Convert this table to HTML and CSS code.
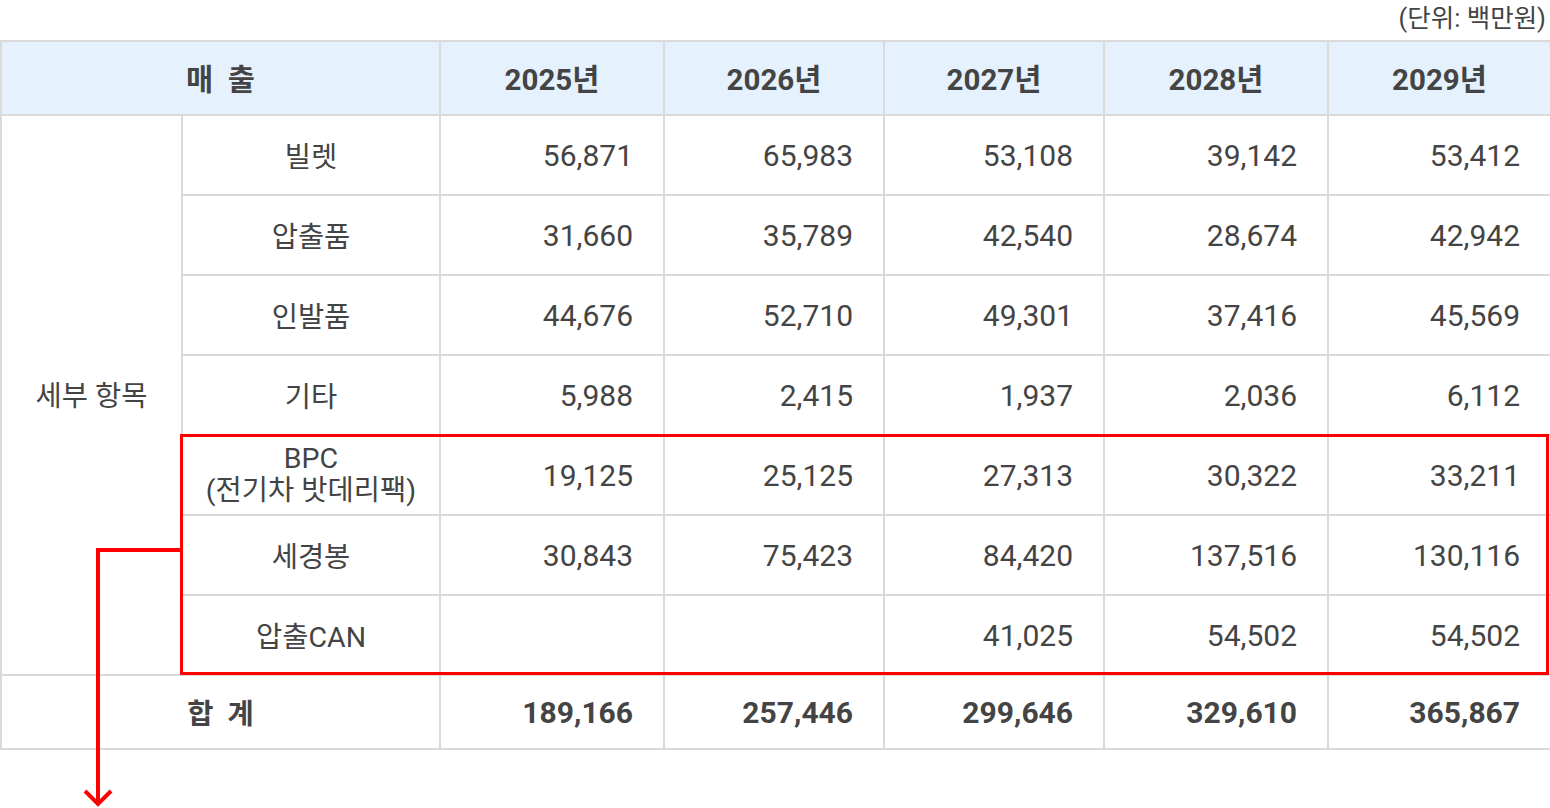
FILE: index.html
```html
<!DOCTYPE html>
<html lang="ko">
<head>
<meta charset="utf-8">
<link rel="stylesheet" href="styles.css">
</head>
<body>
<div class="page">
  <div class="unit">(단위: 백만원)</div>
  <table class="sales">
    <colgroup>
      <col class="c1"><col class="c2"><col class="c3"><col class="c4"><col class="c5"><col class="c6"><col class="c7">
    </colgroup>
    <thead>
      <tr class="head">
        <th colspan="2">매&nbsp;&nbsp;출</th>
        <th>2025년</th><th>2026년</th><th>2027년</th><th>2028년</th><th>2029년</th>
      </tr>
    </thead>
    <tbody>
      <tr>
        <td class="group" rowspan="7">세부 항목</td>
        <td class="name">빌렛</td>
        <td class="num">56,871</td><td class="num">65,983</td><td class="num">53,108</td><td class="num">39,142</td><td class="num">53,412</td>
      </tr>
      <tr>
        <td class="name">압출품</td>
        <td class="num">31,660</td><td class="num">35,789</td><td class="num">42,540</td><td class="num">28,674</td><td class="num">42,942</td>
      </tr>
      <tr>
        <td class="name">인발품</td>
        <td class="num">44,676</td><td class="num">52,710</td><td class="num">49,301</td><td class="num">37,416</td><td class="num">45,569</td>
      </tr>
      <tr>
        <td class="name">기타</td>
        <td class="num">5,988</td><td class="num">2,415</td><td class="num">1,937</td><td class="num">2,036</td><td class="num">6,112</td>
      </tr>
      <tr>
        <td class="name two">BPC<br>(전기차 밧데리팩)</td>
        <td class="num">19,125</td><td class="num">25,125</td><td class="num">27,313</td><td class="num">30,322</td><td class="num">33,211</td>
      </tr>
      <tr>
        <td class="name">세경봉</td>
        <td class="num">30,843</td><td class="num">75,423</td><td class="num">84,420</td><td class="num">137,516</td><td class="num">130,116</td>
      </tr>
      <tr>
        <td class="name">압출CAN</td>
        <td class="num"></td><td class="num"></td><td class="num">41,025</td><td class="num">54,502</td><td class="num">54,502</td>
      </tr>
      <tr class="total">
        <td colspan="2" class="total-label">합&nbsp;&nbsp;계</td>
        <td class="num">189,166</td><td class="num">257,446</td><td class="num">299,646</td><td class="num">329,610</td><td class="num">365,867</td>
      </tr>
    </tbody>
  </table>
  <div class="highlight"></div>
  <svg class="arrow" width="200" height="808" viewBox="0 0 200 808">
    <polyline points="182,550 98,550 98,803" fill="none" stroke="#ff0000" stroke-width="4"/>
    <polyline points="85,791 98,804 111,791" fill="none" stroke="#ff0000" stroke-width="4"/>
  </svg>
</div>
</body>
</html>
```

FILE: styles.css
```css
html, body {
  margin: 0;
  padding: 0;
  background: #ffffff;
}

.page {
  position: relative;
  width: 1550px;
  height: 808px;
  font-family: Roboto, "Noto Sans CJK KR", sans-serif;
  color: #444444;
}

.unit {
  height: 40px;
  line-height: 36px;
  text-align: right;
  padding-right: 4px;
  font-size: 25.5px;
  color: #444444;
}

.sales {
  width: 1550px;
  border-collapse: collapse;
  table-layout: fixed;
  font-size: 30px;
}

.c1 { width: 181px; }
.c2 { width: 258px; }
.c3 { width: 224px; }
.c4 { width: 220px; }
.c5 { width: 220px; }
.c6 { width: 224px; }
.c7 { width: 223px; }

.sales th,
.sales td {
  border: 2px solid #dadada;
  padding: 0;
}

.head th {
  height: 74px;
  padding-bottom: 3px;
  box-sizing: border-box;
  background: #e5f1fd;
  font-weight: 700;
  font-size: 29.5px;
  text-align: center;
  color: #444444;
}

.sales tbody tr {
  height: 80px;
}

.sales tbody tr.total {
  height: 74px;
}

.group {
  text-align: center;
  font-size: 28.5px;
  padding-bottom: 3px !important;
}

.name {
  text-align: center;
  font-size: 28.5px;
  padding-bottom: 2px !important;
}

.name.two {
  line-height: 32px;
  padding-bottom: 0 !important;
}

.num {
  text-align: right;
  padding-right: 30px !important;
}

.total td {
  font-weight: 700;
}

.total-label {
  text-align: center;
  font-size: 28.5px;
  padding-bottom: 2px !important;
}

.highlight {
  position: absolute;
  left: 180px;
  top: 434px;
  width: 1369px;
  height: 241px;
  box-sizing: border-box;
  border: 3px solid #ff0000;
}

.arrow {
  position: absolute;
  left: 0;
  top: 0;
}
```
